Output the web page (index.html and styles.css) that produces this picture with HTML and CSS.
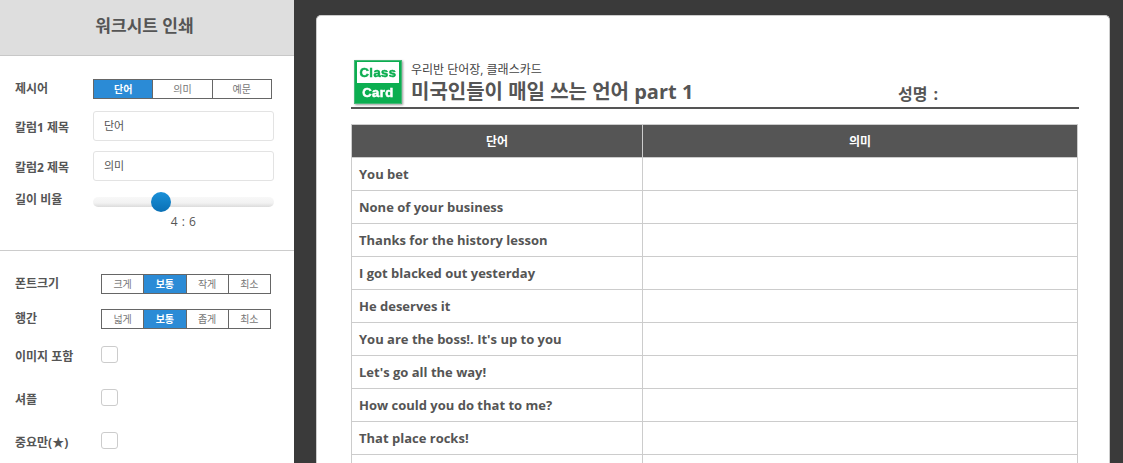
FILE: index.html
```html
<!DOCTYPE html>
<html lang="ko">
<head>
  <meta charset="UTF-8" />
  <title>워크시트 인쇄</title>
  <link rel="stylesheet" href="styles.css">
</head>
<body>

  <aside class="sidebar">
    <h1 class="side-title">워크시트 인쇄</h1>

    <div class="side-top">
      <div class="row row-seg">
        <span class="label">제시어</span>
        <div class="seg seg-3">
          <span class="on">단어</span>
          <span>의미</span>
          <span>예문</span>
        </div>
      </div>
      <div class="row row-input">
        <span class="label">칼럼1 제목</span>
        <div class="text-input">단어</div>
      </div>
      <div class="row row-input">
        <span class="label">칼럼2 제목</span>
        <div class="text-input">의미</div>
      </div>
      <div class="row row-slider">
        <span class="label">길이 비율</span>
        <div class="slider-box">
          <div class="slider"><div class="thumb"></div></div>
          <div class="ratio">4 : 6</div>
        </div>
      </div>
    </div>

    <div class="side-bottom">
      <div class="row row-seg2">
        <span class="label">폰트크기</span>
        <div class="seg seg-4">
          <span>크게</span>
          <span class="on">보통</span>
          <span>작게</span>
          <span>최소</span>
        </div>
      </div>
      <div class="row row-seg2">
        <span class="label">행간</span>
        <div class="seg seg-4">
          <span>넓게</span>
          <span class="on">보통</span>
          <span>좁게</span>
          <span>최소</span>
        </div>
      </div>
      <div class="row row-check">
        <span class="label">이미지 포함</span>
        <div class="check"></div>
      </div>
      <div class="row row-check">
        <span class="label">셔플</span>
        <div class="check"></div>
      </div>
      <div class="row row-check">
        <span class="label">중요만(★)</span>
        <div class="check"></div>
      </div>
    </div>
  </aside>

  <main class="preview">
    <div class="sheet">
      <div class="sheet-head">
        <svg class="logo" width="48" height="44" viewBox="0 0 48 44">
          <rect x="0.5" y="0.5" width="47" height="43" fill="#0bae50" stroke="#45b877" />
          <rect x="3" y="2" width="42" height="21" fill="#fff" />
          <text x="24" y="17" class="logo-top" text-anchor="middle">Class</text>
          <text x="24" y="37" class="logo-bottom" text-anchor="middle">Card</text>
        </svg>
        <div class="head-text">
          <div class="head-sub">우리반 단어장, 클래스카드</div>
          <div class="head-title">미국인들이 매일 쓰는 언어 part 1</div>
        </div>
        <div class="head-name">성명 :</div>
      </div>

      <table class="words">
        <thead>
          <tr><th class="col-word">단어</th><th>의미</th></tr>
        </thead>
        <tbody>
          <tr><td>You bet</td><td></td></tr>
          <tr><td>None of your business</td><td></td></tr>
          <tr><td>Thanks for the history lesson</td><td></td></tr>
          <tr><td>I got blacked out yesterday</td><td></td></tr>
          <tr><td>He deserves it</td><td></td></tr>
          <tr><td>You are the boss!. It's up to you</td><td></td></tr>
          <tr><td>Let's go all the way!</td><td></td></tr>
          <tr><td>How could you do that to me?</td><td></td></tr>
          <tr><td>That place rocks!</td><td></td></tr>
          <tr><td>&nbsp;</td><td></td></tr>
        </tbody>
      </table>
    </div>
  </main>

</body>
</html>
```

FILE: styles.css
```css
body {
  margin: 0;
  display: flex;
  height: 463px;
  overflow: hidden;
  background-color: #3a3a3a;
  font-family: "Open Sans", "Noto Sans CJK KR", sans-serif;
  color: #555;
}

/* Sidebar */
.sidebar {
  width: 294px;
  flex: none;
  background-color: #fff;
}

.side-title {
  margin: 0;
  height: 55px;
  line-height: 51px;
  padding-right: 5px;
  text-align: center;
  font-size: 17px;
  font-weight: 700;
  color: #555;
  background-color: #dedede;
  border-bottom: 1px solid #c8c8c8;
}

.side-top {
  height: 195px;
  padding: 23px 20px 0 15px;
  box-sizing: border-box;
  border-bottom: 1px solid #ccc;
}

.side-bottom {
  padding: 23px 23px 0 15px;
}

.row {
  display: flex;
  align-items: flex-start;
}

.label {
  font-size: 12px;
  font-weight: 700;
  line-height: 18px;
  color: #555;
}

.row-seg .label,
.row-input .label,
.row-slider .label {
  width: 78px;
  flex: none;
}

.row-seg {
  height: 32px;
}

.row-seg .label {
  margin-top: 1px;
}

.row-input {
  height: 40px;
}

.row-input .label {
  margin-top: 8px;
}

.row-slider {
  margin-top: 1px;
}

.row-slider .label {
  margin-top: -1px;
}

.row-seg2 .label,
.row-check .label {
  width: 86px;
  flex: none;
}

.row-seg2 {
  height: 35px;
}

.row-seg2 .label {
  margin-top: 1px;
}

.row-check {
  height: 43px;
  padding-top: 2px;
  box-sizing: border-box;
}

.row-check .label {
  margin-top: 2px;
}

/* Segmented buttons */
.seg {
  display: flex;
  height: 20px;
  box-sizing: border-box;
  border: 1px solid #666;
  font-size: 10px;
  line-height: 18px;
  text-align: center;
  color: #777;
}

.seg span {
  flex: 1;
  border-left: 1px solid #666;
}

.seg span:first-child {
  border-left: none;
}

.seg .on {
  background-color: #2b8bd6;
  color: #fff;
  font-weight: 700;
}

.seg-3 {
  width: 179px;
}

.seg-4 {
  width: 170px;
}

/* Inputs */
.text-input {
  width: 181px;
  height: 30px;
  box-sizing: border-box;
  padding-left: 10px;
  border: 1px solid #e3e3e3;
  border-radius: 3px;
  font-size: 11px;
  line-height: 28px;
  color: #555;
}

.slider-box {
  width: 181px;
  padding-top: 5px;
}

.slider {
  position: relative;
  height: 10px;
  border-radius: 5px;
  background: linear-gradient(to bottom, #f8f8f8, #f2f2f2 60%, #dcdcdc);
}

.thumb {
  position: absolute;
  left: 58px;
  top: -5px;
  width: 20px;
  height: 20px;
  border-radius: 50%;
  background: linear-gradient(to bottom, #1a90d8, #0a70b5);
}

.ratio {
  margin-top: 7px;
  text-align: center;
  font-size: 12px;
  line-height: 16px;
  letter-spacing: 0.5px;
  color: #555;
}

.check {
  width: 17px;
  height: 17px;
  box-sizing: border-box;
  border: 1px solid #ccc;
  border-radius: 3px;
  background-color: #fff;
}

/* Preview */
.preview {
  flex: 1;
  min-width: 0;
  padding: 15px 13px 0 22px;
  overflow: hidden;
}

.sheet {
  height: 600px;
  box-sizing: border-box;
  padding: 44px 30px 0 34px;
  background-color: #fff;
  border: 1px solid #ccc;
  border-bottom: none;
  border-radius: 5px;
}

.sheet-head {
  display: flex;
  align-items: flex-end;
  height: 47px;
  border-bottom: 2px solid #555;
  margin-bottom: 15px;
}

.logo {
  flex: none;
  margin: 0 9px 3px 3px;
  filter: drop-shadow(1px 1px 1px rgba(0, 0, 0, 0.4));
}

.logo-top,
.logo-bottom {
  font-family: "Liberation Sans", sans-serif;
  font-weight: 700;
  font-size: 13px;
  letter-spacing: 0.5px;
  stroke-width: 0.5px;
}

.logo-top {
  fill: #0bae50;
  stroke: #0bae50;
}

.logo-bottom {
  fill: #fff;
  stroke: #fff;
}

.head-text {
  width: 487px;
  flex: none;
}

.head-sub {
  font-size: 12px;
  line-height: 16px;
  color: #444;
}

.head-title {
  font-size: 20px;
  font-weight: 700;
  line-height: 27px;
  color: #555;
  margin-bottom: 2px;
}

.head-name {
  font-size: 16px;
  font-weight: 700;
  line-height: 24px;
  word-spacing: 2px;
  margin-bottom: 1px;
  color: #555;
}

/* Table */
.words {
  width: 727px;
  border-collapse: collapse;
  table-layout: fixed;
  font-size: 13px;
}

.words th {
  height: 33px;
  padding: 0 0 1px;
  box-sizing: border-box;
  background-color: #555;
  color: #fff;
  font-size: 12px;
  font-weight: 700;
  border: 1px solid #ccc;
}

.col-word {
  width: 291px;
}

.words td {
  height: 33px;
  box-sizing: border-box;
  padding: 0 8px 0 7px;
  font-weight: 700;
  color: #555;
  border: 1px solid #ccc;
}
```
